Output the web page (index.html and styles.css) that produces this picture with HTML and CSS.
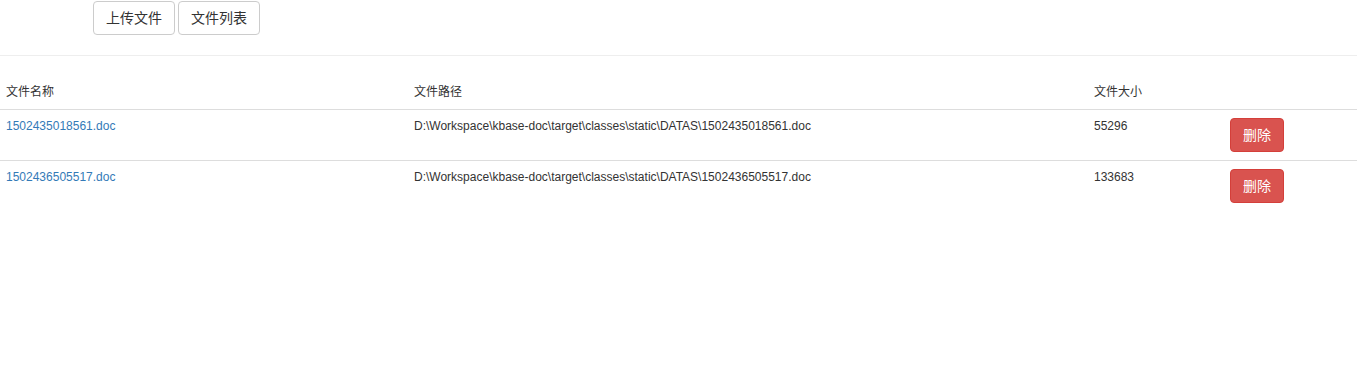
FILE: index.html
```html
<!DOCTYPE html>
<html lang="zh-CN">
<head>
<meta charset="utf-8">
<title>文件列表</title>
<link rel="stylesheet" href="styles.css">
</head>
<body>
<div class="toolbar">
  <button class="btn">上传文件</button>
  <button class="btn">文件列表</button>
</div>
<hr class="divider">
<table class="file-table">
  <thead>
    <tr>
      <th class="col-name">文件名称</th>
      <th class="col-path">文件路径</th>
      <th class="col-size">文件大小</th>
      <th class="col-op"></th>
    </tr>
  </thead>
  <tbody>
    <tr>
      <td><a href="#" class="file-link">1502435018561.doc</a></td>
      <td>D:\Workspace\kbase-doc\target\classes\static\DATAS\1502435018561.doc</td>
      <td>55296</td>
      <td><button class="btn btn-danger">删除</button></td>
    </tr>
    <tr>
      <td><a href="#" class="file-link">1502436505517.doc</a></td>
      <td>D:\Workspace\kbase-doc\target\classes\static\DATAS\1502436505517.doc</td>
      <td>133683</td>
      <td><button class="btn btn-danger">删除</button></td>
    </tr>
  </tbody>
</table>
</body>
</html>
```
FILE: styles.css
```css
html, body {
  margin: 0;
  padding: 0;
  background: #fff;
}
body {
  font-family: "Liberation Sans", Arial, "Noto Sans CJK SC", sans-serif;
  font-size: 12px;
  line-height: 17px;
  color: #333;
}
.toolbar {
  display: flex;
  gap: 3px;
  padding: 1px 0 0 93px;
}
.btn {
  display: inline-block;
  box-sizing: border-box;
  height: 34px;
  padding: 6px 12px;
  font-family: "Liberation Sans", Arial, "Noto Sans CJK SC", sans-serif;
  font-size: 14px;
  line-height: 20px;
  color: #333;
  background: #fff;
  border: 1px solid #ccc;
  border-radius: 4px;
  cursor: pointer;
}
.btn-danger {
  color: #fff;
  background: #d9534f;
  border-color: #d43f3a;
}
.divider {
  margin: 20px 0;
  height: 0;
  border: 0;
  border-top: 1px solid #eee;
}
.file-table {
  width: 100%;
  border-collapse: collapse;
  table-layout: fixed;
}
.file-table th,
.file-table td {
  box-sizing: border-box;
  padding: 8px 6px;
  text-align: left;
  vertical-align: top;
  font-weight: normal;
  line-height: 17px;
}
.file-table th {
  border-bottom: 1px solid #ddd;
}
.file-table tbody tr + tr td {
  border-top: 1px solid #ddd;
}
.col-name { width: 408px; }
.col-path { width: 680px; }
.col-size { width: 136px; }
.file-link {
  color: #337ab7;
  text-decoration: none;
}
```
